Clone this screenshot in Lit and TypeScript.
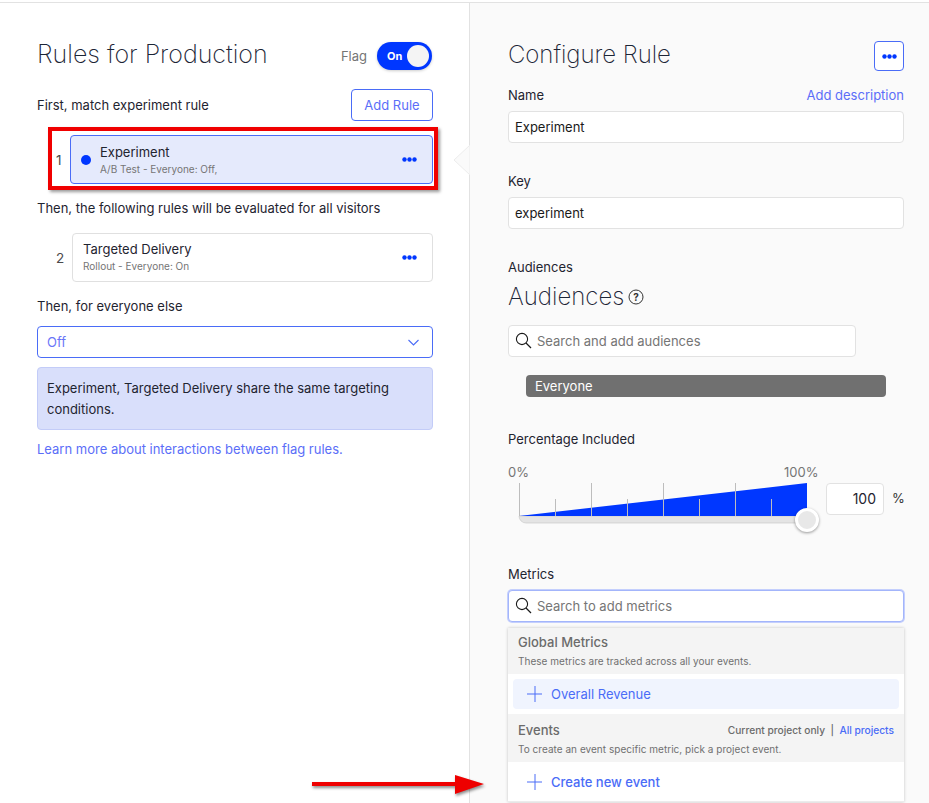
import { LitElement, html, css, svg } from "lit";
import { customElement } from "lit/decorators.js";

const dots = html`<svg class="dots" width="15" height="5" viewBox="0 0 15 5"><circle cx="2.5" cy="2.5" r="2.2"/><circle cx="7.5" cy="2.5" r="2.2"/><circle cx="12.5" cy="2.5" r="2.2"/></svg>`;
const search = html`<svg class="mag" width="17" height="17" viewBox="0 0 17 17" fill="none" stroke="#1a1a1a" stroke-width="1.1"><circle cx="7" cy="7" r="5.6"/><path d="M11 11l5 5" stroke-width="1.3"/></svg>`;
const plus = html`<svg class="plus" width="16" height="16" viewBox="0 0 16 16" stroke="#4a6cf7" stroke-width="1"><path d="M8 0v16M0 8h15"/></svg>`;

const ticks = [
  [519, 483], [555, 499], [591, 483], [627, 499], [663, 483], [699, 499], [735, 483], [771, 499],
];

@customElement("app-root")
export class AppRoot extends LitElement {
  static styles = css`
    :host { display: block; width: 929px; height: 803px; overflow: hidden; position: relative; background: #fff;
      font-family: "Inter", "Liberation Sans", sans-serif; font-size: 13px; color: #1f2430; box-sizing: border-box; }
    * { box-sizing: border-box; }
    .top { height: 3px; border-bottom: 1px solid #e2e2e2; }
    .cols { display: flex; height: 800px; }
    .left { flex: none; width: 470px; padding: 0 36px 0 37px; border-right: 1px solid #e2e2e2; background: #fff; }
    .right { flex: none; width: 459px; padding: 0 25px 0 38px; background: #fafafa; }
    h1 { margin: 0; font-weight: 200; font-size: 25px; line-height: 32px; color: #1c2536; }
    h1.cfg { font-size: 24px; letter-spacing: -.05px; }
    .hrow { height: 32px; margin-top: 35px; display: flex; justify-content: space-between; align-items: center; }
    .hrow.r { margin-top: 36px; }
    .flag { display: flex; align-items: center; gap: 10px; color: #757575; margin: 4px 1px 0 0; }
    .toggle { width: 55px; height: 28px; border-radius: 14px; background: #0037ff; display: flex; align-items: center; justify-content: space-between; padding: 0 3px 0 10px;
      color: #fff; font-weight: 700; font-size: 11px; box-shadow: 0 1px 3px rgba(0,0,0,.2); }
    .knob { width: 22px; height: 22px; border-radius: 50%; background: #f4f4f4; }
    .row1 { margin-top: 19px; height: 32px; display: flex; justify-content: space-between; align-items: center; }
    .btn { width: 82px; height: 32px; border: 1px solid #4a6cf7; border-radius: 4px; background: #fff; color: #5b6ef8; display: flex; align-items: center; justify-content: center; }
    .rule { display: flex; align-items: center; height: 49px; }
    .rule.a { margin-top: 14px; }
    .rule.b { margin-top: 17px; }
    .num { width: 35px; padding-left: 19px; color: #4a4a4a; font-size: 13.5px; }
    .card { flex: 1; height: 49px; border: 1px solid #e0e0e0; border-radius: 4px; background: #fff; display: flex; align-items: center; padding: 0 15px 0 10px; }
    .card.sel { background: #e5eafc; border-color: #4a6cf7; margin-left: -2px; }
    .card.sel .info { margin-top: 1px; }
    .dot { width: 10px; height: 10px; border-radius: 50%; background: #0037ff; margin-right: 9px; }
    .info { flex: 1; margin-top: -1px; }
    .t { line-height: 16px; }
    .s { font-size: 10px; line-height: 14px; color: #757575; margin-top: 2px; }
    .dots { fill: #0037ff; display: block; }
    .lab { line-height: 16px; }
    .m16 { margin-top: 16px; }
    .m30 { margin-top: 30px; }
    .m34 { margin-top: 34px; }
    .m45 { margin-top: 45px; }
    .sel-box { margin-top: 12px; height: 32px; border: 1px solid #4a6cf7; border-radius: 4px; background: #fff; color: #6a75f8; display: flex; align-items: center; justify-content: space-between; padding: 0 13px 0 9px; }
    .note { margin-top: 9px; height: 63px; background: #d9dffb; border: 1px solid #c3ccf8; border-radius: 4px; padding: 10px 9px; line-height: 21px; color: #1f2430; }
    .link { color: #5b6ef8; }
    .more { display: block; margin-top: 11px; line-height: 16px; }

    .icon-btn { width: 30px; height: 30px; border: 1px solid #4a6cf7; border-radius: 4px; background: #fff; display: flex; align-items: center; justify-content: center; margin-top: 2px; }
    .split { display: flex; justify-content: space-between; }
    .input { height: 32px; border: 1px solid #e2e2e2; border-radius: 4px; background: #fff; display: flex; align-items: center; padding: 0 6px 1px; color: #1a1a1a; margin-top: 8px; }
    .input.aud { margin-top: 13px; width: 348px; }
    .ph { color: #757575; margin-left: 5px; }
    .h2 { font-size: 24px; font-weight: 200; line-height: 30px; color: #1c2536; display: flex; align-items: center; gap: 4px; margin-top: 7px; }
    .chip { margin: 18px 18px 0; width: 360px; height: 22px; border-radius: 4px; background: #707070; color: #fff; padding: 0 9px; line-height: 22px; }
    .pct { position: relative; display: flex; height: 64px; margin-top: 10px; }
    .slider { display: block; flex: none; overflow: visible; }
    .thumb { position: absolute; left: 287px; top: 51px; width: 24px; height: 24px; border-radius: 50%; background: #e8e8e8; border: 3px solid #fff; box-shadow: 0 1px 3px rgba(0,0,0,.4); }
    .pct-row { display: flex; margin-top: 26px; height: 32px; }
    .pct-input { height: 32px; width: 58px; border: 1px solid #e2e2e2; border-radius: 4px; background: #fff; text-align: right; line-height: 30px; padding-right: 7px; font-size: 14px; }
    .pct-sign { margin-left: 8px; line-height: 30px; color: #333; }
    .focus { border-color: #a3b5fb; box-shadow: 0 0 0 1px #c4cffd; }
    .dd { margin-top: 6px; background: #fff; box-shadow: 0 0 3px rgba(0,0,0,.22); }
    .gh { background: #f4f4f4; color: #6b6b6b; padding: 6px 10px 0; }
    .gh.g { height: 46px; }
    .gh.e { height: 48px; padding-top: 8px; }
    .gh b { font-weight: 500; display: block; line-height: 16px; }
    .gh small { display: block; font-size: 10px; letter-spacing: .03px; line-height: 14px; color: #707070; margin-top: 4px; }
    .item { display: flex; align-items: center; gap: 8px; color: #4a6cf7; }
    .item.hl { margin: 5px; height: 30px; background: #f0f4fe; border-radius: 4px; padding-left: 14px; }
    .item.new { height: 40px; padding-left: 19px; font-weight: 500; border-bottom: 1px solid #ececec; }
    .proj { font-size: 10.2px; line-height: 16px; font-weight: 500; color: #6b6b6b; }
    .proj .link { color: #4a6cf7; }
    .red-box { position: absolute; left: 48px; top: 127px; width: 390px; height: 63px; border: 4px solid #f00000; box-shadow: 2px 2px 3px rgba(0,0,0,.4); pointer-events: none; }
    .notch { position: absolute; left: 453px; top: 145px; }
    .arrow { position: absolute; left: 305px; top: 770px; }
    .arrow path { filter: drop-shadow(1px 2px 1.5px rgba(0,0,0,.45)); }
    .qm { font-family: "Inter", sans-serif; font-weight: 700; font-size: 10px; }
    .sl { font-family: "Inter", sans-serif; font-size: 13px; }
  `;

  render() {
    return html`
      <div class="top"></div>
      <div class="cols">
        <section class="left">
          <div class="hrow"><h1>Rules for Production</h1>
            <div class="flag">Flag <div class="toggle">On<span class="knob"></span></div></div></div>
          <div class="row1"><span>First, match experiment rule</span><div class="btn">Add Rule</div></div>
          <div class="rule a"><div class="num">1</div>
            <div class="card sel"><span class="dot"></span><div class="info"><div class="t">Experiment</div><div class="s">A/B Test - Everyone: Off,</div></div>${dots}</div></div>
          <div class="lab m16">Then, the following rules will be evaluated for all visitors</div>
          <div class="rule b"><div class="num">2</div>
            <div class="card"><div class="info"><div class="t">Targeted Delivery</div><div class="s">Rollout - Everyone: On</div></div>${dots}</div></div>
          <div class="lab m16">Then, for everyone else</div>
          <div class="sel-box"><span>Off</span><svg width="11" height="7" viewBox="0 0 11 7" fill="none" stroke="#4a6cf7" stroke-width="1.1"><path d="M.5 1l5 5 5-5"/></svg></div>
          <div class="note">Experiment, Targeted Delivery share the same targeting conditions.</div>
          <a class="link more">Learn more about interactions between flag rules.</a>
        </section>
        <section class="right">
          <div class="hrow r"><h1 class="cfg">Configure Rule</h1><div class="icon-btn">${dots}</div></div>
          <div class="split lab m16"><span>Name</span><span class="link">Add description</span></div>
          <div class="input">Experiment</div>
          <div class="lab m30">Key</div>
          <div class="input">experiment</div>
          <div class="lab m30">Audiences</div>
          <div class="h2">Audiences <svg width="16" height="16" viewBox="0 0 16 16" fill="none" stroke="#333"><circle cx="8" cy="8" r="7"/><text class="qm" x="8" y="11.5" text-anchor="middle" fill="#333" stroke="none">?</text></svg></div>
          <div class="input aud">${search}<span class="ph">Search and add audiences</span></div>
          <div class="chip">Everyone</div>
          <div class="lab m34">Percentage Included</div>
          <div class="pct">
            <svg class="slider" width="318" height="64" viewBox="508 457 318 64">
              ${svg`
                <text class="sl" x="508" y="477" fill="#757575">0%</text>
                <text class="sl" x="784" y="477" fill="#757575">100%</text>
                <path d="M519 516h288v7h-281a7 7 0 0 1-7-7z" fill="#e4e4e4" stroke="#c4c4c4" stroke-width=".6"/>
                <path d="M519 516L807 483V516Z" fill="#0037ff"/>
                ${ticks.map(([x, y]) => svg`<path d="M${x + .5} ${y}V516" stroke="#bdbdbd"/>`)}
              `}
            </svg>
            <div class="pct-row"><div class="pct-input">100</div><div class="pct-sign">%</div></div>
            <div class="thumb"></div>
          </div>
          <div class="lab m45">Metrics</div>
          <div class="input focus">${search}<span class="ph">Search to add metrics</span></div>
          <div class="dd">
            <div class="gh g"><b>Global Metrics</b><small>These metrics are tracked across all your events.</small></div>
            <div class="item hl">${plus}Overall Revenue</div>
            <div class="gh e"><div class="split"><b>Events</b><span class="proj">Current project only &nbsp;|&nbsp; <span class="link">All projects</span></span></div><small>To create an event specific metric, pick a project event.</small></div>
            <div class="item new">${plus}Create new event</div>
          </div>
        </section>
      </div>
      <div class="red-box"></div>
      <svg class="notch" width="17" height="30" viewBox="0 0 17 30"><path d="M17 0L1 15l16 15z" fill="#fafafa" stroke="#ececec"/></svg>
      <svg class="arrow" width="190" height="30" viewBox="305 770 190 30">
        <path d="M312 782h143v-7l29 9-29 10v-8h-143z" fill="#ee0000"/>
      </svg>
    `;
  }
}
